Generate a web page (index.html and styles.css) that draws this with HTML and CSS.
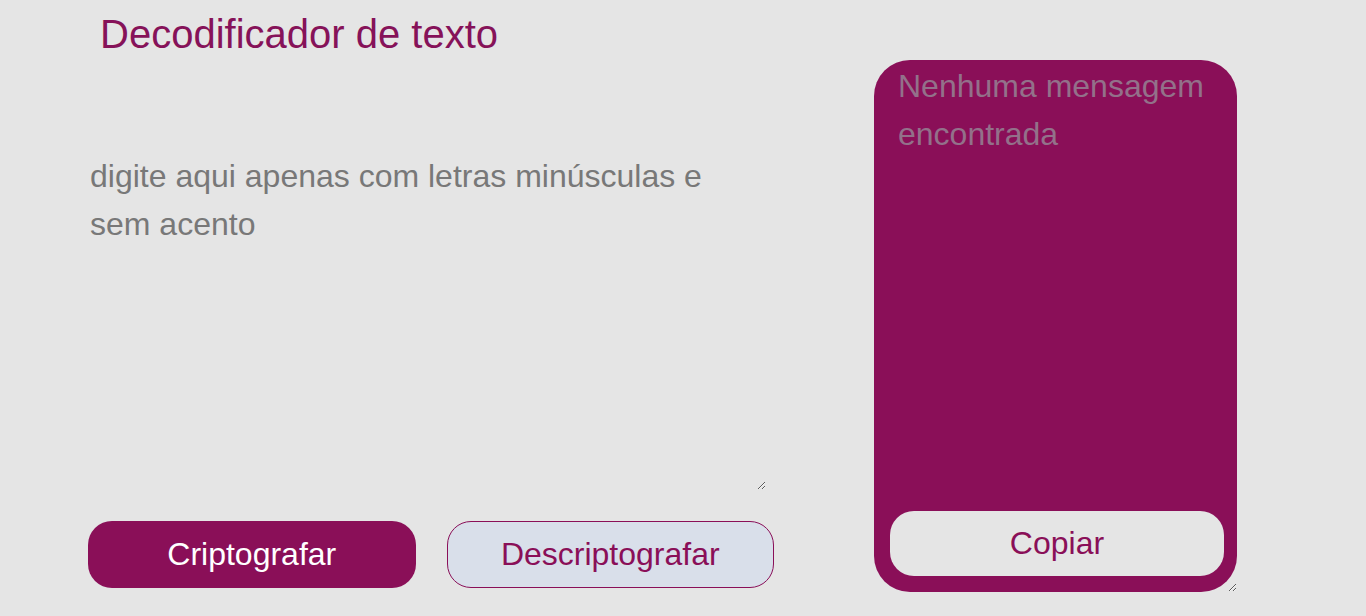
FILE: index.html
```html
<!doctype html>
<html>
    <head>
        <meta charset="utf-8">
        <link rel="stylesheet" href="styles.css">
    </head>
    <body>
        <div class="page">
            <main class="entrada">
                <h1 class="titulo">Decodificador de texto</h1>
                <textarea class="texto" placeholder="digite aqui apenas com letras minúsculas e sem acento" autofocus></textarea>
                <div class="botoes">
                    <button class="btn btn-cripto">Criptografar</button>
                    <button class="btn btn-descripto">Descriptografar</button>
                </div>
            </main>

            <aside class="saida">
                <textarea class="resultado" placeholder="Nenhuma mensagem encontrada" readonly></textarea>
                <button class="btn btn-copiar">Copiar</button>
            </aside>
        </div>
    </body>
</html>
```

FILE: styles.css
```css
body {
    margin: 0;
    background: #e5e5e5;
    font-family: "Liberation Sans", Arial, sans-serif;
}

.page {
    display: flex;
    align-items: flex-start;
    gap: 100px;
    padding: 0 0 64px 88px;
}

.entrada {
    display: flex;
    flex-direction: column;
    width: 686px;
}

.titulo {
    margin: 0 0 0 12px;
    padding-top: 10px;
    font-size: 40px;
    line-height: 48px;
    font-weight: normal;
    color: #861259;
}

.texto {
    margin-top: 92px;
    width: 678px;
    height: 340px;
    box-sizing: border-box;
    padding: 2px;
    border: none;
    outline: none;
    background: transparent;
    font-family: inherit;
    font-size: 32px;
    line-height: 48px;
    color: #333;
    caret-color: #3a0a20;
}

.texto::placeholder {
    color: #787878;
}

.botoes {
    display: flex;
    gap: 31px;
    margin-top: 31px;
}

.btn {
    font-family: inherit;
    font-size: 32px;
    cursor: pointer;
}

.btn-cripto,
.btn-descripto {
    width: 328px;
    height: 67px;
    border-radius: 24px;
}

.btn-cripto {
    background: #8a0f58;
    color: #ffffff;
    border: none;
}

.btn-descripto {
    background: #d9dfea;
    color: #8a0f58;
    border: 1px solid #8a0f58;
}

.saida {
    position: relative;
    margin-top: 60px;
    width: 363px;
    height: 532px;
}

.resultado {
    display: block;
    width: 363px;
    height: 532px;
    box-sizing: border-box;
    padding: 2px 24px;
    border: none;
    outline: none;
    border-radius: 36px;
    background: #8a0f58;
    font-family: inherit;
    font-size: 32px;
    line-height: 48px;
    color: #ffffff;
}

.resultado::placeholder {
    color: #93718a;
}

.btn-copiar {
    position: absolute;
    left: 16px;
    bottom: 16px;
    width: 334px;
    height: 65px;
    border: none;
    border-radius: 24px;
    background: #e5e5e5;
    color: #8a0f58;
}
```
